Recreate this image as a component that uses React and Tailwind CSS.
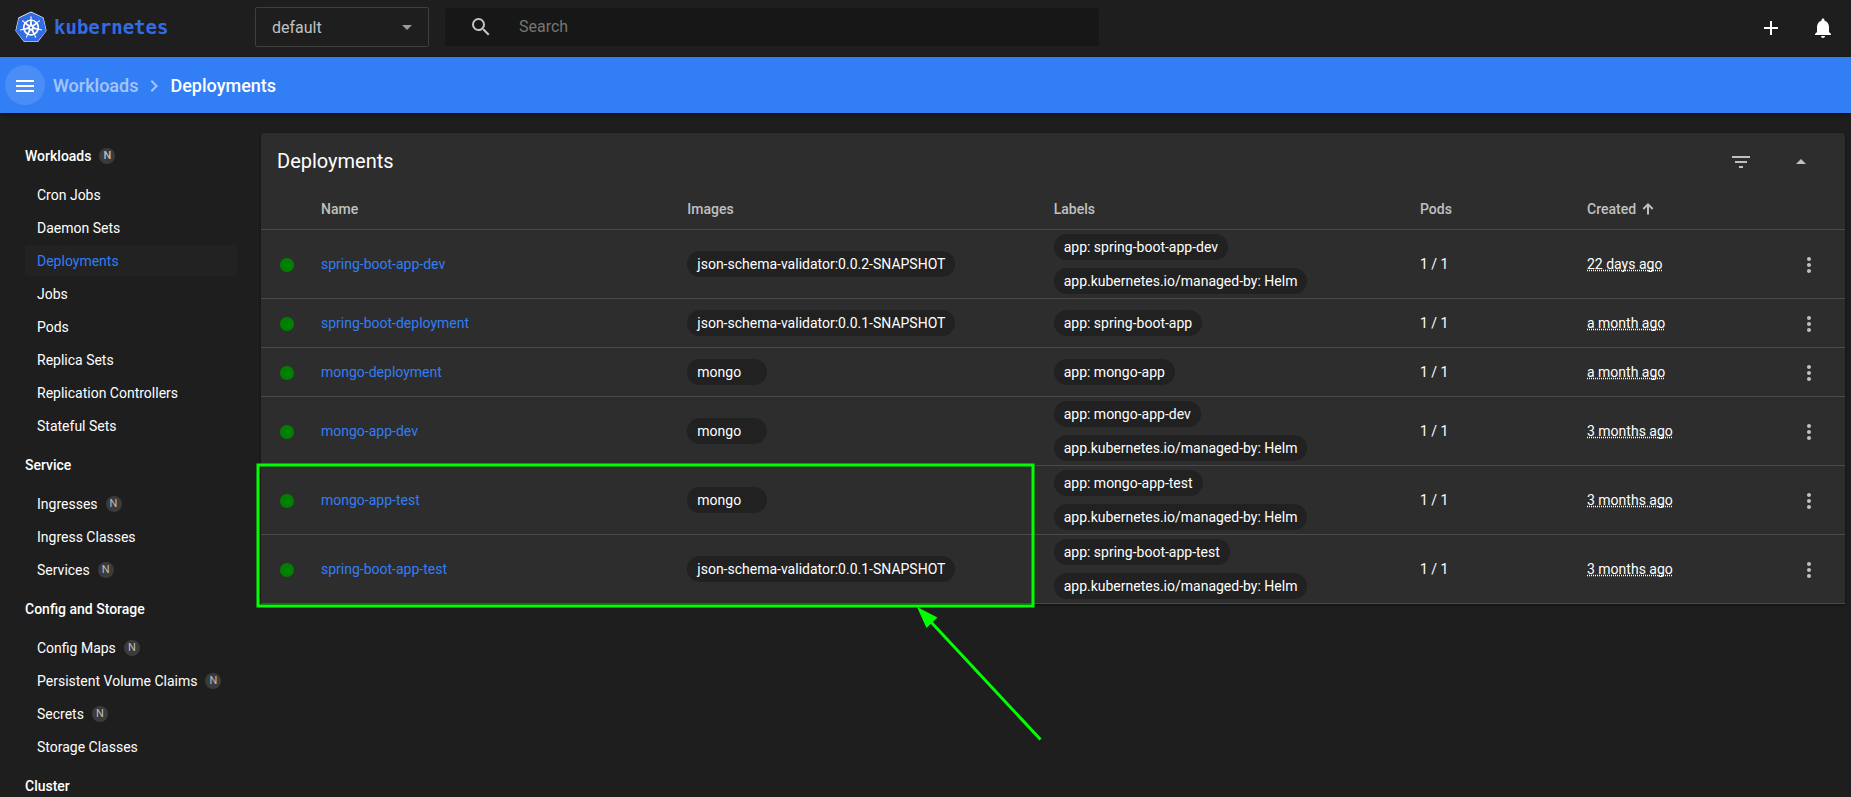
import {
  MdAdd,
  MdArrowDropDown,
  MdArrowDropUp,
  MdChevronRight,
  MdFilterList,
  MdMenu,
  MdMoreVert,
  MdNotifications,
  MdSearch,
} from "react-icons/md";
import { SiKubernetes } from "react-icons/si";

const NAV_GROUPS = [
  {
    title: "Workloads",
    badge: true,
    items: [
      { label: "Cron Jobs" },
      { label: "Daemon Sets" },
      { label: "Deployments", active: true },
      { label: "Jobs" },
      { label: "Pods" },
      { label: "Replica Sets" },
      { label: "Replication Controllers" },
      { label: "Stateful Sets" },
    ],
  },
  {
    title: "Service",
    items: [
      { label: "Ingresses", badge: true },
      { label: "Ingress Classes" },
      { label: "Services", badge: true },
    ],
  },
  {
    title: "Config and Storage",
    items: [
      { label: "Config Maps", badge: true },
      { label: "Persistent Volume Claims", badge: true },
      { label: "Secrets", badge: true },
      { label: "Storage Classes" },
    ],
  },
  { title: "Cluster", items: [] },
];

const HELM = "app.kubernetes.io/managed-by: Helm";

const DEPLOYMENTS = [
  {
    name: "spring-boot-app-dev",
    image: "json-schema-validator:0.0.2-SNAPSHOT",
    labels: ["app: spring-boot-app-dev", HELM],
    created: "22 days ago",
  },
  {
    name: "spring-boot-deployment",
    image: "json-schema-validator:0.0.1-SNAPSHOT",
    labels: ["app: spring-boot-app"],
    created: "a month ago",
  },
  {
    name: "mongo-deployment",
    image: "mongo",
    labels: ["app: mongo-app"],
    created: "a month ago",
  },
  {
    name: "mongo-app-dev",
    image: "mongo",
    labels: ["app: mongo-app-dev", HELM],
    created: "3 months ago",
  },
  {
    name: "mongo-app-test",
    image: "mongo",
    labels: ["app: mongo-app-test", HELM],
    created: "3 months ago",
  },
  {
    name: "spring-boot-app-test",
    image: "json-schema-validator:0.0.1-SNAPSHOT",
    labels: ["app: spring-boot-app-test", HELM],
    created: "3 months ago",
  },
];

function Logo() {
  return (
    <a href="#/" className="flex w-[255px] shrink-0 items-center gap-[7px] pl-[15px]">
      <span className="grid size-8 shrink-0 place-items-center">
        <svg viewBox="0 0 34 34" className="col-start-1 row-start-1 size-8" aria-hidden="true">
          <path
            d="M17 2 29.2 7.8 32.2 20.8 23.8 31.7H10.2L1.8 20.8 4.8 7.8Z"
            fill="#fff"
            stroke="#fff"
            strokeWidth="2.6"
            strokeLinejoin="round"
          />
        </svg>
        <SiKubernetes className="col-start-1 row-start-1 size-[30px] text-[#326ce5]" aria-hidden="true" />
      </span>
      <span className="font-['DejaVu_Sans_Mono',monospace] text-[19px] leading-6 font-bold text-[#326ce5]">
        kubernetes
      </span>
    </a>
  );
}

function TopBar() {
  return (
    <header className="flex h-[57px] shrink-0 items-center pb-[3px]">
      <Logo />
      <div className="relative w-[174px] shrink-0">
        <select
          aria-label="Namespace"
          className="h-10 w-full appearance-none rounded-xs border border-[#3f3f3f] bg-transparent px-4 pt-0.5 text-base text-[#c1c1c1] outline-none"
        >
          <option>default</option>
        </select>
        <MdArrowDropDown
          size={24}
          className="pointer-events-none absolute top-2 right-[10px] text-[#9a9a9a]"
        />
      </div>
      <label className="ml-4 flex h-[38px] max-w-[654px] flex-1 items-center rounded-xs bg-[#171717] pl-6">
        <MdSearch size={24} className="shrink-0 text-[#c4c4c4]" />
        <input
          type="search"
          aria-label="Search"
          placeholder="Search"
          className="ml-[26px] min-w-0 flex-1 bg-transparent text-base text-white outline-none placeholder:text-[#757575]"
        />
      </label>
      <div className="ml-auto flex gap-7 pt-0.5 pr-4 text-white">
        <button type="button" aria-label="Create new resource">
          <MdAdd size={24} />
        </button>
        <button type="button" aria-label="Notifications">
          <MdNotifications size={24} />
        </button>
      </div>
    </header>
  );
}

function Breadcrumbs() {
  return (
    <div className="z-10 flex h-14 shrink-0 items-center bg-[#327ef5] pl-[5px] shadow-[0_2px_4px_rgba(0,0,0,0.4)]">
      <button
        type="button"
        aria-label="Toggle navigation"
        className="flex size-10 items-center justify-center rounded-full bg-white/12 pt-0.5 text-white"
      >
        <MdMenu size={24} />
      </button>
      <nav aria-label="Breadcrumb" className="ml-2 flex items-center pt-0.5 text-lg font-medium">
        <a href="#/workloads" className="text-white/55">
          Workloads
        </a>
        <MdChevronRight size={24} className="mx-1 text-white/55" />
        <span className="text-white">Deployments</span>
      </nav>
    </div>
  );
}

function NamespacedBadge() {
  return (
    <span className="flex size-4 items-center justify-center rounded-full bg-[#3b3b3b] text-[11px] leading-4 text-[#bdbdbd]">
      N
    </span>
  );
}

function Sidebar() {
  return (
    <nav aria-label="Resources" className="w-[261px] shrink-0 pt-5 pr-6 pl-[25px] text-sm text-white">
      {NAV_GROUPS.map((group) => (
        <section key={group.title} className="flex flex-col">
          <a href="#/group" className="my-1.5 flex h-[33px] items-center gap-2 font-medium">
            {group.title}
            {group.badge && <NamespacedBadge />}
          </a>
          {group.items.map((item) => (
            <a
              key={item.label}
              href="#/resource"
              className={
                item.active
                  ? "my-px flex h-[31px] items-center gap-2 rounded-xs bg-[#222] pl-3 text-[#327ef5]"
                  : "my-px flex h-[31px] items-center gap-2 rounded-xs pl-3"
              }
            >
              {item.label}
              {item.badge && <NamespacedBadge />}
            </a>
          ))}
        </section>
      ))}
    </nav>
  );
}

function Chip({ children }) {
  return (
    <span className="flex h-[26px] w-fit min-w-20 items-center rounded-full bg-[#212121] px-[10px] whitespace-nowrap">
      {children}
    </span>
  );
}

function SortArrow() {
  return (
    <svg viewBox="0 0 12 12" className="ml-1.5 size-3" fill="none" stroke="currentColor" strokeWidth="2" aria-hidden="true">
      <path d="M6 11.5V1.5M1.3 6 6 1.4 10.7 6" />
    </svg>
  );
}

function DeploymentTable() {
  return (
    <table className="w-full table-fixed border-collapse text-left text-sm text-white">
      <colgroup>
        <col className="w-[60px]" />
        <col />
        <col />
        <col />
        <col className="w-[167px]" />
        <col className="w-[167px]" />
        <col className="w-[91px]" />
      </colgroup>
      <thead className="text-[#c0c0c0]">
        <tr className="h-10 border-b border-[#4a4a4a]">
          <th aria-label="Status" />
          <th className="font-medium">Name</th>
          <th className="font-medium">Images</th>
          <th className="font-medium">Labels</th>
          <th className="font-medium">Pods</th>
          <th className="font-medium">
            <button type="button" className="flex items-center">
              Created
              <SortArrow />
            </button>
          </th>
          <th aria-label="Actions" />
        </tr>
      </thead>
      <tbody>
        {DEPLOYMENTS.map((row) => (
          <tr key={row.name} className="h-[49px] border-b border-[#4a4a4a]">
            <td className="pt-0.5">
              <span className="ml-[19px] block size-[14px] rounded-full bg-[#008000]" />
            </td>
            <td>
              <a href="#/deployment" className="text-[#327ef5]">
                {row.name}
              </a>
            </td>
            <td>
              <Chip>{row.image}</Chip>
            </td>
            <td>
              <div className="flex flex-col gap-2 py-1">
                {row.labels.map((label) => (
                  <Chip key={label}>{label}</Chip>
                ))}
              </div>
            </td>
            <td>1 / 1</td>
            <td>
              <span className="underline decoration-dotted [text-decoration-skip-ink:none]">{row.created}</span>
            </td>
            <td className="pt-0.5">
              <button
                type="button"
                aria-label={"Actions for " + row.name}
                className="ml-[43px] flex items-center text-[#c0c0c0]"
              >
                <MdMoreVert size={24} />
              </button>
            </td>
          </tr>
        ))}
      </tbody>
    </table>
  );
}

function Annotation() {
  return (
    <svg
      width="800"
      height="290"
      viewBox="0 0 800 290"
      className="pointer-events-none absolute top-[327px] -left-2"
      fill="none"
      stroke="#00ff00"
      strokeWidth="3"
      aria-hidden="true"
    >
      <rect x="5" y="5" width="775" height="141" />
      <path d="M678 162 787.5 279.5" />
      <path d="M664 147 684.5 157.5 673.5 168Z" fill="#00ff00" stroke="none" />
    </svg>
  );
}

export default function App() {
  return (
    <div className="flex h-screen flex-col overflow-hidden bg-[#1e1e1e] font-[Roboto,sans-serif]">
      <TopBar />
      <Breadcrumbs />
      <div className="flex min-h-0 flex-1">
        <Sidebar />
        <main className="min-w-0 flex-1 pt-5 pr-1.5">
          <section className="relative rounded-t bg-[#2d2d2d] shadow-[0_1px_3px_rgba(0,0,0,0.5)]">
            <div className="flex h-14 items-center pr-8 pl-4 text-[#c0c0c0]">
              <h1 className="text-xl text-white">Deployments</h1>
              <button type="button" aria-label="Filter" className="ml-auto pt-0.5">
                <MdFilterList size={24} />
              </button>
              <button type="button" aria-label="Collapse" className="ml-9 pt-0.5">
                <MdArrowDropUp size={24} />
              </button>
            </div>
            <DeploymentTable />
            <Annotation />
          </section>
        </main>
      </div>
    </div>
  );
}
